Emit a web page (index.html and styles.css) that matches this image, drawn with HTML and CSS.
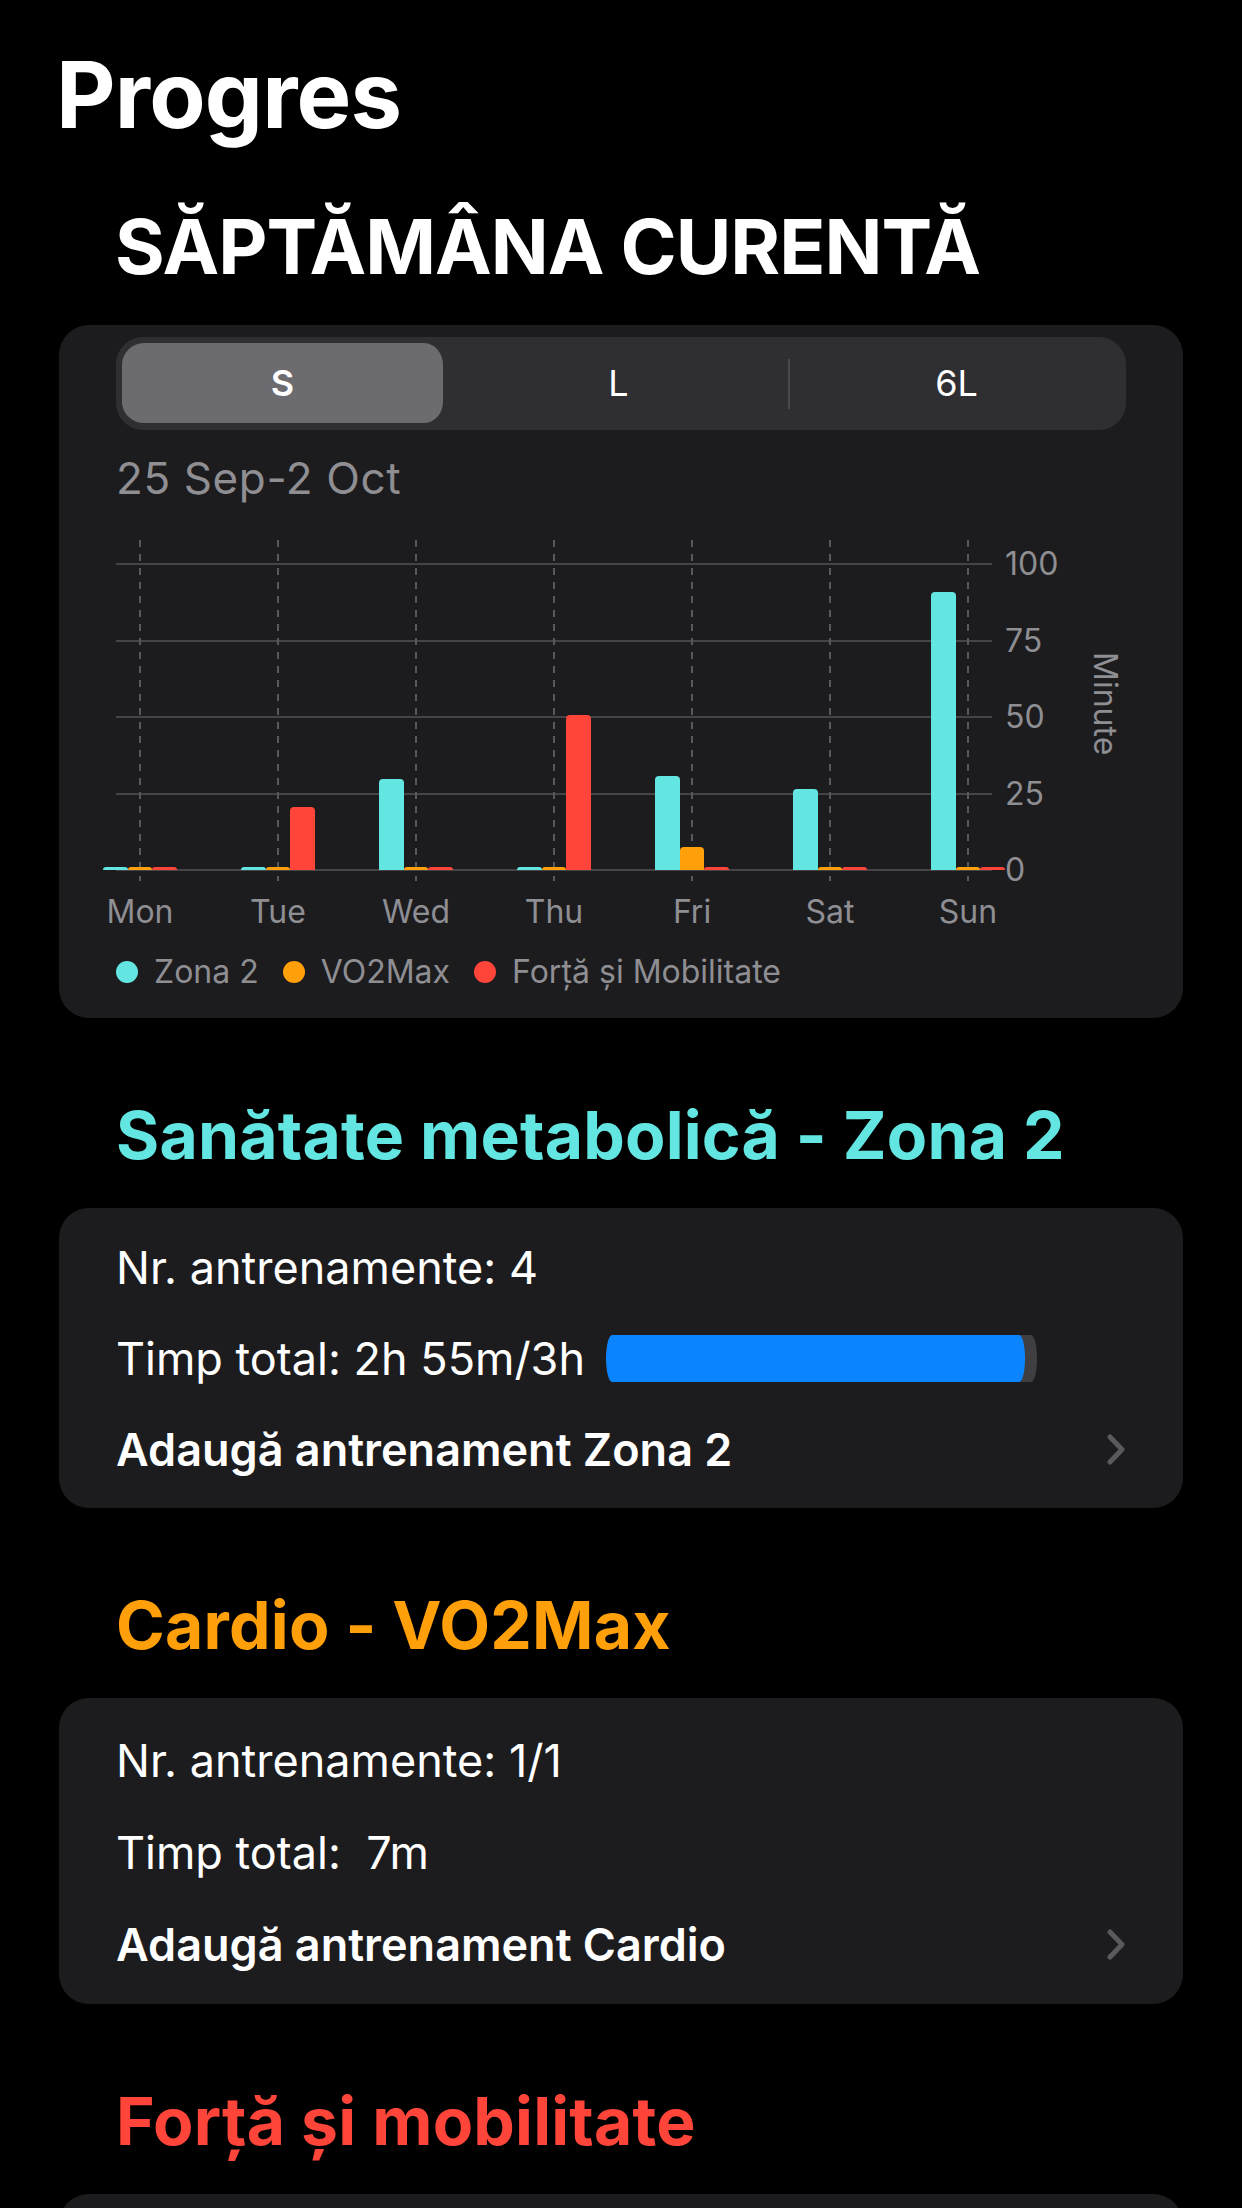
FILE: index.html
```html
<!DOCTYPE html>
<html lang="ro">
<head>
<meta charset="utf-8">
<title>Progres</title>
<link rel="stylesheet" href="styles.css">
</head>
<body>
<main class="screen">
  <h1 class="large-title">Progres</h1>
  <h2 class="week-title">SĂPTĂMÂNA CURENTĂ</h2>

  <section class="card chart-card">
    <div class="segmented">
      <div class="seg seg-active">S</div>
      <div class="seg">L</div>
      <div class="seg-divider"></div>
      <div class="seg">6L</div>
    </div>

    <div class="date-range">25 Sep-2 Oct</div>

    <div class="plot-row">
      <div class="plot">
        <div class="gridlines"><i></i><i></i><i></i><i></i><i></i></div>
        <div class="days">
          <div class="day"><div class="bars"><span class="bar mint" style="height:3px"></span><span class="bar orange" style="height:3px"></span><span class="bar red" style="height:3px"></span></div></div>
          <div class="day"><div class="bars"><span class="bar mint" style="height:3px"></span><span class="bar orange" style="height:3px"></span><span class="bar red" style="height:63px"></span></div></div>
          <div class="day"><div class="bars"><span class="bar mint" style="height:91px"></span><span class="bar orange" style="height:3px"></span><span class="bar red" style="height:3px"></span></div></div>
          <div class="day"><div class="bars"><span class="bar mint" style="height:3px"></span><span class="bar orange" style="height:3px"></span><span class="bar red" style="height:155px"></span></div></div>
          <div class="day"><div class="bars"><span class="bar mint" style="height:94px"></span><span class="bar orange" style="height:23px"></span><span class="bar red" style="height:3px"></span></div></div>
          <div class="day"><div class="bars"><span class="bar mint" style="height:81px"></span><span class="bar orange" style="height:3px"></span><span class="bar red" style="height:3px"></span></div></div>
          <div class="day"><div class="bars"><span class="bar mint" style="height:278px"></span><span class="bar orange" style="height:3px"></span><span class="bar red" style="height:3px"></span></div></div>
        </div>
      </div>
      <div class="y-axis"><span>100</span><span>75</span><span>50</span><span>25</span><span>0</span></div>
      <div class="y-unit">Minute</div>
    </div>

    <div class="x-axis">
      <span>Mon</span><span>Tue</span><span>Wed</span><span>Thu</span><span>Fri</span><span>Sat</span><span>Sun</span>
    </div>

    <div class="legend">
      <div class="legend-item"><span class="dot mint"></span>Zona 2</div>
      <div class="legend-item"><span class="dot orange"></span>VO2Max</div>
      <div class="legend-item"><span class="dot red"></span>Forță și Mobilitate</div>
    </div>
  </section>

  <h3 class="section-title mint-text">Sanătate metabolică - Zona 2</h3>
  <section class="card list-card">
    <div class="row">Nr. antrenamente: 4</div>
    <div class="row">
      <span>Timp total: 2h 55m/3h</span>
      <div class="progress"><div class="progress-fill" style="width:97.2%"></div></div>
    </div>
    <div class="row row-link">
      <span>Adaugă antrenament Zona 2</span>
      <svg class="chevron" viewBox="0 0 18 31" width="18" height="31"><polyline points="3,3 15,15.5 3,28"/></svg>
    </div>
  </section>

  <h3 class="section-title orange-text">Cardio - VO2Max</h3>
  <section class="card list-card list-card-roomy">
    <div class="row">Nr. antrenamente: 1/1</div>
    <div class="row"><span>Timp total:&nbsp; 7m</span></div>
    <div class="row row-link">
      <span>Adaugă antrenament Cardio</span>
      <svg class="chevron" viewBox="0 0 18 31" width="18" height="31"><polyline points="3,3 15,15.5 3,28"/></svg>
    </div>
  </section>

  <h3 class="section-title red-text">Forță și mobilitate</h3>
  <section class="card list-card card-tail"></section>
</main>
</body>
</html>
```

FILE: styles.css
```css
* { box-sizing: border-box; }

html, body {
  margin: 0;
  padding: 0;
  background: #000;
}

body {
  font-family: Inter, "Noto Sans", "Liberation Sans", sans-serif;
  color: #fff;
  overflow: hidden;
}

.screen {
  width: 1242px;
  padding: 0 59px;
}

.large-title {
  margin: 40px 0 0 -3px;
  font-size: 92px;
  line-height: 110px;
  font-weight: 700;
  letter-spacing: -0.8px;
}

.week-title {
  margin: 50px 0 0 56px;
  font-size: 76px;
  line-height: 92px;
  font-weight: 700;
  letter-spacing: -1px;
}

.card {
  background: #1c1c1e;
  border-radius: 30px;
}

/* ---------- chart card ---------- */
.chart-card {
  margin-top: 33px;
  padding: 12px 57px 26px;
}

.segmented {
  display: flex;
  height: 93px;
  background: #2f2e33;
  border-radius: 27px;
}

.seg {
  flex: 1 1 0;
  display: flex;
  align-items: center;
  justify-content: center;
  padding: 6px 9px 7px 6px;
  background-clip: content-box;
  font-size: 36px;
  color: #fff;
}

.seg-active {
  background-color: #6c6c70;
  border-radius: 28px;
  font-weight: 600;
}

.seg-divider {
  width: 2px;
  height: 50px;
  align-self: center;
  background: #48484c;
}

.date-range {
  margin-top: 22px;
  font-size: 44px;
  line-height: 52px;
  letter-spacing: 0.6px;
  color: #8e8e93;
}

.plot-row {
  display: flex;
  margin-top: 36px;
  height: 341px;
}

.plot {
  position: relative;
  width: 876px;
  height: 341px;
  flex: none;
}

.gridlines {
  position: absolute;
  inset: 0;
  display: flex;
  flex-direction: column;
  justify-content: space-between;
  padding: 23px 0 10px;
}

.gridlines i {
  display: block;
  height: 2px;
  background: #454547;
}

.days {
  position: relative;
  display: flex;
  justify-content: space-between;
  height: 100%;
}

.day {
  position: relative;
  width: 48px;
  height: 100%;
  display: flex;
  flex-direction: column;
  justify-content: flex-end;
  align-items: center;
  padding-bottom: 11px;
}

.day::before {
  content: "";
  position: absolute;
  left: 23px;
  top: 0;
  bottom: 0;
  width: 2px;
  background: repeating-linear-gradient(to bottom, #58585c 0 7px, transparent 7px 14px);
}

.bars {
  position: relative;
  display: flex;
  align-items: flex-end;
  width: 74px;
  flex: none;
}

.bar {
  flex: 1;
  border-radius: 4px 4px 0 0;
}

.bar.mint, .dot.mint { background: #63e6e2; }
.bar.orange, .dot.orange { background: #ff9f0a; }
.bar.red, .dot.red { background: #ff453a; }

.y-axis {
  width: 62px;
  margin-left: 13px;
  display: flex;
  flex-direction: column;
  justify-content: space-between;
  padding-top: 13px;
  font-size: 32px;
  line-height: 22px;
  color: #8e8e93;
}

.y-unit {
  margin: 112px 0 0 22px;
  align-self: flex-start;
  writing-mode: vertical-rl;
  font-size: 32px;
  line-height: 32px;
  color: #8e8e93;
}

.x-axis {
  width: 876px;
  display: flex;
  justify-content: space-between;
  margin-top: 11px;
  font-size: 32px;
  line-height: 40px;
  color: #8e8e93;
}

.x-axis span {
  width: 48px;
  display: flex;
  justify-content: center;
  white-space: nowrap;
}

.legend {
  display: flex;
  align-items: center;
  gap: 24px;
  margin-top: 20px;
  font-size: 32px;
  line-height: 40px;
  color: #8e8e93;
}

.legend-item {
  display: flex;
  align-items: center;
  gap: 16px;
}

.dot {
  width: 22px;
  height: 22px;
  border-radius: 50%;
}

/* ---------- sections ---------- */
.section-title {
  margin: 79px 0 0 57px;
  font-size: 66px;
  line-height: 76px;
  font-weight: 700;
  letter-spacing: 0.2px;
}

.mint-text { color: #63e6e2; }
.orange-text { color: #ff9f0a; }
.red-text { color: #ff453a; }

.list-card {
  margin-top: 35px;
  padding: 14px 58px 13px 57px;
}

.list-card-roomy {
  padding-top: 16px;
  padding-bottom: 14px;
}

.list-card-roomy .row {
  height: 92px;
}

.row {
  display: flex;
  align-items: center;
  height: 91px;
  font-size: 45px;
  white-space: nowrap;
}

.row-link {
  justify-content: space-between;
  font-weight: 600;
}

.progress {
  width: 431px;
  height: 47px;
  margin-left: 21px;
  background: #3f3f43;
  border-radius: 6px / 23px;
  overflow: hidden;
}

.progress-fill {
  height: 100%;
  background: #0a84ff;
  border-radius: 6px / 23px;
}

.chevron {
  flex: none;
  fill: none;
  stroke: #5a5a5e;
  stroke-width: 5;
  stroke-linecap: round;
  stroke-linejoin: round;
}

.card-tail {
  height: 300px;
}
```
